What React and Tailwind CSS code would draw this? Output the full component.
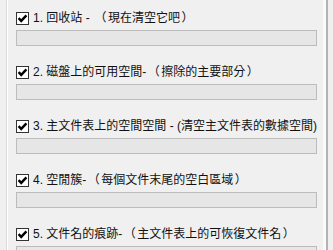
import React from "react";

const items = [
  "1. 回收站 - （現在清空它吧）",
  "2. 磁盤上的可用空間-（擦除的主要部分）",
  "3. 主文件表上的空間空間 - (清空主文件表的數據空間)",
  "4. 空閒簇-（每個文件末尾的空白區域）",
  "5. 文件名的痕跡-（主文件表上的可恢復文件名）",
];

const Check = () => (
  <span className="flex h-[13px] w-[13px] shrink-0 items-center justify-center border border-[#333333] bg-white">
    <svg width="11" height="11" viewBox="0 0 11 11">
      <path d="M1.6 5.2 L4.2 7.9 L9.4 2.4" fill="none" stroke="#000" strokeWidth="2.4" />
    </svg>
  </span>
);

// full-width parens get a little extra room, like the original UI font
const Label = ({ text }) => (
  <span className="whitespace-nowrap leading-[13px]">
    {text.split(/([（）])/).map((part, i) =>
      part === "（" || part === "）" ? (
        <span key={i} className="inline-block w-[15px] text-center">
          {part}
        </span>
      ) : (
        <span key={i}>{part}</span>
      )
    )}
  </span>
);

export default function App() {
  return (
    <div
      className="flex h-[250px] w-[333px] overflow-hidden bg-[#f0f0f0] text-[12px] text-[#111111]"
      style={{ fontFamily: '"Liberation Sans", "Noto Sans CJK TC", sans-serif' }}
    >
      <div className="w-[6px] shrink-0" />
      <div className="w-[1px] shrink-0 bg-[#dadada]" />
      <div className="w-[1px] shrink-0 bg-white" />
      <div className="flex w-[315px] shrink-0 flex-col pl-[8px] pt-[12px]">
        {items.map((t) => (
          <div key={t} className="mb-[20px] flex flex-col">
            <div className="flex h-[13px] items-center gap-[4px]">
              <Check />
              <Label text={t} />
            </div>
            <div className="mt-[5px] h-[16px] w-[301px] border border-[#bcbcbc] bg-[#e6e6e6]" />
          </div>
        ))}
      </div>
      <div className="w-[3px] shrink-0 bg-[#fafafa]" />
      <div className="w-[2px] shrink-0 bg-[#b4b4b4]" />
    </div>
  );
}
